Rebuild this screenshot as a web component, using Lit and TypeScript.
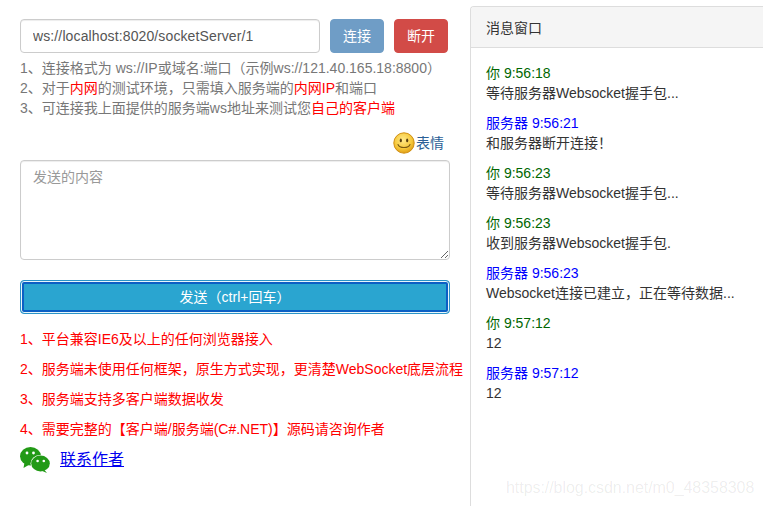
import { LitElement, html, css } from "lit";
import { customElement } from "lit/decorators.js";

const msgs: [string, string, string][] = [
  ["me", "你 9:56:18", "等待服务器Websocket握手包..."],
  ["sv", "服务器 9:56:21", "和服务器断开连接！"],
  ["me", "你 9:56:23", "等待服务器Websocket握手包..."],
  ["me", "你 9:56:23", "收到服务器Websocket握手包."],
  ["sv", "服务器 9:56:23", "Websocket连接已建立，正在等待数据..."],
  ["me", "你 9:57:12", "12"],
  ["sv", "服务器 9:57:12", "12"],
];

@customElement("app-root")
export class AppRoot extends LitElement {
  static styles = css`
    :host {
      display: block;
      width: 763px;
      height: 506px;
      overflow: hidden;
      position: relative;
      background: #fff;
      font-family: "Liberation Sans", "Noto Sans CJK SC", sans-serif;
      font-size: 14px;
      line-height: 20px;
      color: #333;
    }
    .page { display: flex; height: 506px; }
    .left { width: 430px; padding: 19px 20px 0; flex: none; }
    .conn { display: flex; gap: 10px; height: 34px; }
    .url {
      width: 300px; height: 34px; box-sizing: border-box;
      border: 1px solid #ccc; border-radius: 4px; padding: 6px 12px;
      font: inherit; letter-spacing: .12px; color: #555; background: #fff; outline: none;
      box-shadow: inset 0 1px 1px rgba(0,0,0,.075);
    }
    .btn {
      width: 54px; height: 34px; border: 1px solid; border-radius: 4px;
      color: #fff; font: inherit; padding: 0; text-align: center;
    }
    .blue { background: #6f9dc6; border-color: #6f9dc6; }
    .danger { background: #d24b47; border-color: #d24b47; }
    .help { margin-top: 5px; color: #777; }
    .r { color: #f00; }
    .emoji-row {
      display: flex; justify-content: flex-end; align-items: center;
      gap: 1px; height: 22px; margin-top: 14px; padding-right: 6px;
    }
    .emoji-row span { color: #2b5f96; }
    .ta {
      display: block; width: 430px; height: 100px; box-sizing: border-box;
      margin-top: 6px;
      border: 1px solid #ccc; border-radius: 4px; padding: 6px 12px;
      font: inherit; color: #555; outline: none; resize: vertical;
      box-shadow: inset 0 1px 1px rgba(0,0,0,.075);
    }
    .ta::placeholder { color: #999; }
    .send {
      display: block; width: 430px; height: 34px; margin-top: 20px;
      box-sizing: border-box; padding: 0;
      background: #2aa5d0; color: #fff; font: inherit;
      border: 1px solid #2a94c8; border-radius: 4px;
      box-shadow: inset 0 0 0 1px #e8f6fb, inset 0 0 0 3px #0c5fc4;
    }
    .notes { margin-top: 15px; color: #f00; display: flex; flex-direction: column; gap: 10px; white-space: nowrap; }
    .contact { display: flex; align-items: center; gap: 10px; margin-top: 7px; height: 27px; }
    .contact a { color: #00e; font-size: 16px; text-decoration: underline; }
    .panel {
      margin-top: 6px; flex: 1; min-width: 0; height: 520px;
      border: 1px solid #ddd; border-right: none; border-radius: 4px 0 0 0;
      box-sizing: border-box;
    }
    .head {
      height: 41px; box-sizing: border-box; padding: 11px 15px 0;
      background: #f5f5f5; border-bottom: 1px solid #ddd; border-radius: 3px 0 0 0;
    }
    .body { padding: 15px; }
    .msg { margin-bottom: 10px; white-space: nowrap; }
    .me { color: #060; }
    .sv { color: #00f; }
    .mark {
      position: absolute; left: 506px; top: 478px;
      color: rgba(0,0,0,.08); font-size: 16px; letter-spacing: -.05px;
      line-height: 20px; white-space: nowrap;
    }
  `;

  render() {
    return html`
      <div class="page">
        <div class="left">
          <div class="conn">
            <input class="url" .value=${"ws://localhost:8020/socketServer/1"} />
            <button class="btn blue">连接</button>
            <button class="btn danger">断开</button>
          </div>
          <div class="help">
            <div>1、连接格式为 ws://IP或域名:端口（示例ws://121.40.165.18:8800）</div>
            <div>2、对于<span class="r">内网</span>的测试环境，只需填入服务端的<span class="r">内网IP</span>和端口</div>
            <div>3、可连接我上面提供的服务端ws地址来测试您<span class="r">自己的客户端</span></div>
          </div>
          <div class="emoji-row">
            <svg width="22" height="22" viewBox="0 0 22 22">
              <defs>
                <radialGradient id="f" cx="45%" cy="35%" r="70%">
                  <stop offset="0" stop-color="#ffe98a" />
                  <stop offset=".6" stop-color="#f6c93c" />
                  <stop offset="1" stop-color="#dc960f" />
                </radialGradient>
              </defs>
              <circle cx="11" cy="11" r="10.2" fill="url(#f)" stroke="#d08f12" />
              <ellipse cx="7.8" cy="8.4" rx="1.1" ry="1.9" fill="#5a4010" />
              <ellipse cx="14.2" cy="8.4" rx="1.1" ry="1.9" fill="#5a4010" />
              <path d="M5 12.5C6.5 16.5 15.5 16.5 17 12.5" fill="none" stroke="#7a5a14" stroke-width="1.1" stroke-linecap="round" />
            </svg>
            <span>表情</span>
          </div>
          <textarea class="ta" placeholder="发送的内容"></textarea>
          <button class="send">发送（ctrl+回车）</button>
          <div class="notes">
            <div>1、平台兼容IE6及以上的任何浏览器接入</div>
            <div>2、服务端未使用任何框架，原生方式实现，更清楚WebSocket底层流程</div>
            <div>3、服务端支持多客户端数据收发</div>
            <div>4、需要完整的【客户端/服务端(C#.NET)】源码请咨询作者</div>
          </div>
          <div class="contact">
            <svg width="30" height="27" viewBox="0 0 30 27">
              <g transform="translate(0 1)">
                <path fill="#229a16" d="M4.5 15.5L3.5 21L9.5 17.5z" />
                <ellipse cx="10.5" cy="9.2" rx="10.5" ry="9.2" fill="#229a16" />
                <circle cx="7" cy="6" r="1.4" fill="#fff" />
                <circle cx="13.5" cy="6" r="1.4" fill="#fff" />
                <ellipse cx="20.5" cy="16.5" rx="10" ry="8.5" fill="#fff" />
                <path fill="#229a16" d="M24 22.5L27 26L21 23.5z" />
                <ellipse cx="20.5" cy="16.5" rx="9.3" ry="7.9" fill="#229a16" />
                <circle cx="17.6" cy="14" r="1.3" fill="#fff" />
                <circle cx="23.8" cy="14" r="1.3" fill="#fff" />
              </g>
            </svg>
            <a href="#">联系作者</a>
          </div>
        </div>
        <div class="panel">
          <div class="head">消息窗口</div>
          <div class="body">
            ${msgs.map(
              ([k, t, m]) => html`<div class="msg"><div class=${k}>${t}</div><div>${m}</div></div>`
            )}
          </div>
        </div>
      </div>
      <div class="mark">https://blog.csdn.net/m0_48358308</div>
    `;
  }
}
